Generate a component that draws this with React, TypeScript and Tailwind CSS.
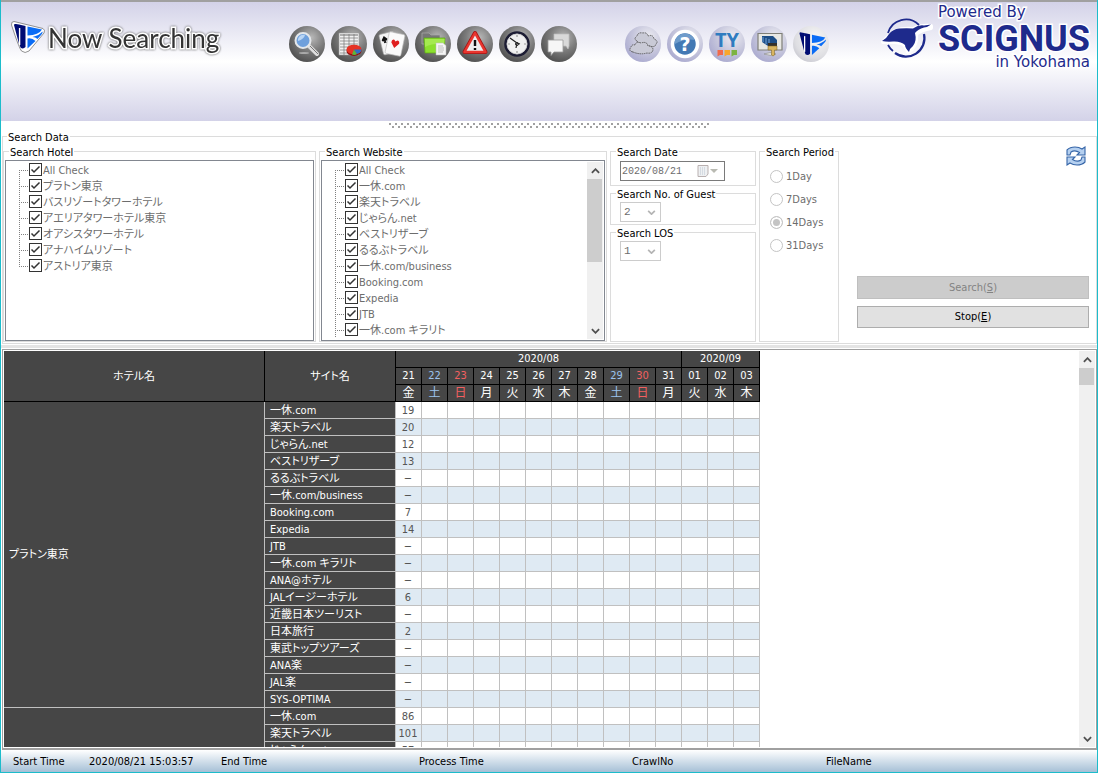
import React, { useState } from "react";

const hotels = [
  "All Check",
  "プラトン東京",
  "バスリゾートタワーホテル",
  "アエリアタワーホテル東京",
  "オアシスタワーホテル",
  "アナハイムリゾート",
  "アストリア東京",
];

const websites = [
  "All Check",
  "一休.com",
  "楽天トラベル",
  "じゃらん.net",
  "ベストリザーブ",
  "るるぶトラベル",
  "一休.com/business",
  "Booking.com",
  "Expedia",
  "JTB",
  "一休.com キラリト",
];

const sites = [
  ...websites.slice(1),
  "ANA@ホテル",
  "JALイージーホテル",
  "近畿日本ツーリスト",
  "日本旅行",
  "東武トップツアーズ",
  "ANA楽",
  "JAL楽",
  "SYS-OPTIMA",
];

// the second hotel is still being crawled, only its first sites are in
const results = [
  {
    id: 1,
    hotel: "プラトン東京",
    counts: ["19", "20", "12", "13", "−", "−", "7", "14", "−", "−", "−", "6", "−", "2", "−", "−", "−", "−"],
  },
  { id: 2, hotel: "", counts: ["86", "101", "57"] },
];

const days = [
  ["21", "金"],
  ["22", "土"],
  ["23", "日"],
  ["24", "月"],
  ["25", "火"],
  ["26", "水"],
  ["27", "木"],
  ["28", "金"],
  ["29", "土"],
  ["30", "日"],
  ["31", "月"],
  ["01", "火"],
  ["02", "水"],
  ["03", "木"],
];

const periods = ["1Day", "7Days", "14Days", "31Days"];

const dayColor = (weekday: string) => {
  if (weekday === "土") return "text-[#9cc3ee]";
  if (weekday === "日") return "text-[#f26060]";
  return "text-white";
};

const MarkShape = () => (
  <>
    <path d="M7 8 Q7 6.500 9 7 L12 7.600 V27 Z" fill="#000c73" />
    <path d="M12 7.600 L18.500 9 V30 Q16 32.500 13.500 30.500 L12 26Z" fill="#000c73" />
    <path d="M12.600 11 V28" stroke="#fff" strokeWidth="1.400" />
    <path d="M20.500 9.500 L35 12.500 Q32 18 20.500 18.500Z" fill="#0a6cf5" />
    <path d="M25.500 20 Q32 18.500 35.500 14.500 Q36 16 34.500 17.500 L30.500 22 Q28.500 20 25.500 20Z" fill="#0a6cf5" />
    <path d="M20.500 21.500 Q25 20.500 28.500 24 L20.500 31.500Z" fill="#0a6cf5" />
  </>
);

const BrandMark = () => (
  <svg viewBox="0 0 36 34" className="mt-[18px] h-[34px] w-9 shrink-0" aria-hidden="true">
    <path
      d="M4 1.500 L33 8.500 Q35.500 10 34 13 L19 31 Q15 34 11.500 31 Q9 28 1.500 5 Q1 1.500 4 1.500Z"
      fill="#fff"
      stroke="#777"
      strokeWidth="0.800"
    />
    <g transform="translate(-3 -3)">
      <MarkShape />
    </g>
  </svg>
);

const SearchIcon = () => (
  <>
    <ellipse cx="15" cy="27" rx="5" ry="1" fill="#aaa" />
    <path d="M20 20 L28 28" stroke="#ddd" strokeWidth="4" strokeLinecap="round" />
    <path d="M21 20 L29 28" stroke="#777" strokeWidth="1" />
    <circle cx="14" cy="14.500" r="7.500" fill="#6fa0dc" stroke="#e4e7ea" strokeWidth="2" />
    <path d="M9 13 Q11 8 16 9 Q15 13 9 15Z" fill="#b9d5f4" />
  </>
);

const ReportIcon = () => (
  <>
    <path d="M8 7 H28 V29 H8Z" fill="#f2f2f2" stroke="#999" strokeWidth="0.600" />
    <path d="M9 9 H27" stroke="#999" strokeWidth="1.500" />
    <path d="M9 12 H27 M9 15 H27 M9 18 H27 M9 21 H20 M9 24 H18 M9 27 H18 M13 8 V29 M18 8 V29 M23 8 V20" stroke="#777" strokeWidth="0.700" />
    <ellipse cx="23" cy="25" rx="7.500" ry="5" fill="#8e1212" />
    <ellipse cx="23" cy="23.500" rx="7.500" ry="4.800" fill="#e53325" />
    <path d="M23 23.500 L21 28.500 Q24 29.500 26 28Z" fill="#59b83c" />
    <path d="M23 23.500 L26 28 Q30 27 30.500 23.500Z" fill="#2d6fc7" />
  </>
);

const CardsIcon = () => (
  <>
    <g transform="rotate(-14 14 17)">
      <rect x="8" y="7" width="15" height="21" rx="1.500" fill="#f4f4f4" stroke="#aaa" strokeWidth="0.600" />
      <path d="M12.500 9.500 L15.500 13 Q15 15.500 12.500 14.300 Q10 15.500 9.500 13Z M12.500 13 L14 16.500 H11Z" fill="#111" />
    </g>
    <g transform="rotate(12 22 18)">
      <rect x="14" y="7" width="16" height="22" rx="1.500" fill="#fbfbfb" stroke="#bbb" strokeWidth="0.600" />
      <path d="M22 22 L18 17 Q18 13.500 20.500 14 L22 15.500 L23.500 14 Q26 13.500 26 17Z" fill="#e02020" />
    </g>
  </>
);

const FolderIcon = () => (
  <>
    <path d="M7 7 H14 L16 9 H25 V18 H7Z" fill="#777" stroke="#aaa" strokeWidth="0.700" />
    <path d="M9 12 H30 L29 27 H10Z" fill="#8ce02f" stroke="#5ba713" strokeWidth="0.700" />
    <path d="M10 13 H29.500 L29.200 18 Q18 17 10 21Z" fill="#a5ea50" />
    <path d="M21 17 H28 L31 19.500 V29 H21Z" fill="#f5f5f5" stroke="#bbb" strokeWidth="0.500" />
    <path d="M23 20 H28 M23 22 H29 M23 24 H29 M23 26 H28" stroke="#aaa" strokeWidth="0.700" />
  </>
);

const WarningIcon = () => (
  <>
    <path d="M18 7 L28.500 26 H7.500Z" fill="#eee" stroke="#a31515" strokeWidth="4" strokeLinejoin="round" />
    <path d="M18 7 L28.500 26 H7.500Z" fill="#eee" stroke="#e8352e" strokeWidth="2.500" strokeLinejoin="round" />
    <path d="M18 14 V20 M18 22 V24" stroke="#111" strokeWidth="2.400" />
  </>
);

const ClockIcon = () => (
  <>
    <circle cx="18" cy="18" r="11.500" fill="#f0f0f0" stroke="#1c1c33" strokeWidth="2.600" />
    <circle cx="18" cy="18" r="10" fill="none" stroke="#ccc" strokeWidth="0.800" />
    <path d="M18 9 V11 M18 25 V27 M9 18 H11 M25 18 H27" stroke="#999" strokeWidth="1.200" />
    <path d="M11 12 L18 17 L17 22 M18 17 L21 18" fill="none" stroke="#222" strokeWidth="1.200" />
    <circle cx="18" cy="18" r="1.500" fill="none" stroke="#222" />
  </>
);

const ChatIcon = () => (
  <>
    <path d="M13 8 H28 V20 L27 23 L25 20 H13Z" fill="#d9d9d9" stroke="#bbb" strokeWidth="0.700" />
    <path d="M7 14 H22 V26 H13 L10 29.500 V26 H7Z" fill="#f6f6f6" stroke="#999" strokeWidth="0.800" />
  </>
);

const CloudIcon = () => (
  <g fill="#c9cad6" stroke="#555" strokeWidth="0.900" strokeDasharray="1.500 0.700">
    <path d="M12 15 Q8 13 12 10 Q13 6 18 7 Q22 6 23 10 Q28 8 29 13 Q34 15 31 18 Q30 22 25 20 Q17 21 12 15Z" />
    <path d="M8 26 Q3 25 6 21 Q7 18 10 19 Q11 15 16 17 Q22 15 23 20 Q28 20 28 24 Q27 28 22 27 Q15 29 8 26Z" />
  </g>
);

const HelpIcon = () => (
  <>
    <circle cx="18" cy="18" r="12.500" fill="#4379b4" stroke="#fff" strokeWidth="3.500" />
    <path d="M8 14 Q12 7 18 7.500 Q25 8 28 14 Q18 12 8 18Z" fill="#6f9ccb" />
    <text x="18" y="25" textAnchor="middle" fill="#fff" fontSize="19" fontWeight="700" fontFamily="DejaVu Sans">?</text>
  </>
);

const TyIcon = () => (
  <>
    <text x="18" y="21" textAnchor="middle" fill="#2f7cc0" fontSize="20" fontWeight="700" fontFamily="Open Sans">TY</text>
    <path d="M8.500 24 H14 V29 H11 L8.500 30.500Z" fill="#f26a4b" />
    <path d="M15.500 24 H21 V29 H18 L15.500 30.500Z" fill="#f9a72b" />
    <path d="M22.500 24 H28 V29 H25 L22.500 30.500Z" fill="#7cb342" />
  </>
);

const DesktopIcon = () => (
  <>
    <path d="M7 7.500 H31 V24 H7Z" fill="#e8e8e4" stroke="#7f7f78" strokeWidth="1.200" />
    <path d="M11 10 H22 L26 14 V20 H17 L11 16Z" fill="#1d4d86" />
    <path d="M12 11 V16 M15 12 V18 M18 13 V20" stroke="#78a8d8" strokeWidth="1" />
    <path d="M13 28 Q19 25 25 28 Q20 31 13 28Z" fill="#ddd" stroke="#888" strokeWidth="0.600" />
    <path d="M17 17 H26 V23 H17Z" fill="#33302b" />
    <path d="M17 20 H26 V24 H23.500 V29 Q22 31 20.500 29 V24 H17Z" fill="#d8b45f" stroke="#7d6223" strokeWidth="0.500" />
  </>
);

const tools = [
  { label: "Search", icon: <SearchIcon /> },
  { label: "Report", icon: <ReportIcon /> },
  { label: "Cards", icon: <CardsIcon /> },
  { label: "Folder", icon: <FolderIcon /> },
  { label: "Alert", icon: <WarningIcon /> },
  { label: "Schedule", icon: <ClockIcon /> },
  { label: "Messages", icon: <ChatIcon /> },
];

const links = [
  { label: "Weather", icon: <CloudIcon /> },
  { label: "Help", icon: <HelpIcon /> },
  { label: "TY", icon: <TyIcon /> },
  { label: "Desktop", icon: <DesktopIcon /> },
];

const ToolSvg = ({ children }: { children: React.ReactNode }) => (
  <svg viewBox="0 0 36 36" className="size-9" aria-hidden="true">
    {children}
  </svg>
);

const SwanLogo = () => (
  <svg viewBox="0 0 54 46" className="mt-[12px] h-[46px] w-[54px]" aria-hidden="true">
    <g fill="#fff" stroke="#fff" strokeWidth="4" strokeLinejoin="round">
      <path d="M2 28 Q8 21 14 17 Q22 14 32 15 Q40 11 50 12 L50 14 Q40 16 35 20 Q36 29 31 35 L27 38 Q25 31 20 29 Q10 27 2 28Z" />
    </g>
    <path d="M7 19 A18.500 18.500 0 0 1 38 11" fill="none" stroke="#1e2a8c" strokeWidth="1.800" />
    <path d="M43 20 A18.500 18.500 0 0 1 14 39" fill="none" stroke="#1e2a8c" strokeWidth="2.200" />
    <path d="M12 37 A18.500 18.500 0 0 1 7 31" fill="none" stroke="#1e2a8c" strokeWidth="1.800" />
    <path
      d="M1 27 Q6 24 8 20 Q12 15 18 14.500 Q26 14 32 14.500 Q38 10.500 43 11.500 L50 10.500 Q47 13 43 13.500 Q37 15 34 19 Q36 27 32 32 Q29 34 28 38 Q24 34 24 31 Q20 27 12 27.500 Q6 28 1 27Z"
      fill="#1e2a8c"
    />
  </svg>
);

const Chevron = ({ up, className }: { up?: boolean; className: string }) => (
  <svg viewBox="0 0 10 6" className={className} aria-hidden="true">
    <path d={up ? "M1 5 L5 1 L9 5" : "M1 1 L5 5 L9 1"} fill="none" stroke="currentColor" strokeWidth="2" />
  </svg>
);

const ScrollBar = ({ thumb }: { thumb: string }) => (
  <div className="flex w-4 shrink-0 flex-col bg-[#f0f0f0] text-[#505050]">
    <button aria-label="Scroll up" className="flex h-[17px] items-center justify-center">
      <Chevron up className="h-[6px] w-[9px]" />
    </button>
    <div className="flex-1">
      <div className={`mr-px bg-[#cdcdcd] ${thumb}`} />
    </div>
    <button aria-label="Scroll down" className="flex h-[17px] items-center justify-center">
      <Chevron className="h-[6px] w-[9px]" />
    </button>
  </div>
);

const Group = ({ title, className, children }: { title: string; className?: string; children: React.ReactNode }) => (
  <fieldset className={`min-w-0 border border-[#dcdcdc] ${className ?? ""}`}>
    <legend className="ml-[5px] px-px pt-[2px] leading-[13px] text-black">{title}</legend>
    {children}
  </fieldset>
);

const CheckTree = ({ name, items, open }: { name: string; items: string[]; open?: boolean }) => {
  const [checked, setChecked] = useState<boolean[]>(items.map(() => true));

  const toggle = (index: number) => {
    setChecked((prev) => prev.map((value, i) => (i === index ? !value : value)));
  };

  return (
    <ul className="min-w-0 flex-1 overflow-hidden pl-[13px] text-[#6d6d6d]">
      {items.map((item, index) => {
        const top = index === 0 ? 8 : 0;
        const bottom = index === items.length - 1 && !open ? 9 : 16;
        return (
          <li key={item} className="flex h-4 items-start">
            <svg viewBox="0 0 10 16" className="h-4 w-[10px] shrink-0" shapeRendering="crispEdges" aria-hidden="true">
              <path d={`M0.500 ${top} V${bottom} M2 8.500 H10`} stroke="#808080" strokeDasharray="1 1" />
            </svg>
            <span className="relative mt-px size-[13px] shrink-0">
              <input
                id={`${name}-${index}`}
                type="checkbox"
                checked={checked[index]}
                onChange={() => toggle(index)}
                className="block size-[13px] appearance-none border border-[#333] bg-white"
              />
              {checked[index] && (
                <svg viewBox="0 0 13 13" className="pointer-events-none absolute inset-0" aria-hidden="true">
                  <path d="M2.500 6.500 L5 9 L10.500 3.500" fill="none" stroke="#333" strokeWidth="1.500" />
                </svg>
              )}
            </span>
            <label htmlFor={`${name}-${index}`} className="pl-px leading-[18px] whitespace-nowrap">
              {item}
            </label>
          </li>
        );
      })}
    </ul>
  );
};

const NumberSelect = ({ label, value }: { label: string; value: string }) => (
  <div className="relative mt-px ml-[9px] w-[41px]">
    <select
      aria-label={label}
      defaultValue={value}
      disabled
      className="block h-5 w-full appearance-none border border-[#ccc] bg-white pl-[3px] font-['Liberation_Mono',monospace] text-[11px] text-[#6d6d6d] opacity-100"
    >
      <option>1</option>
      <option>2</option>
    </select>
    <Chevron className="pointer-events-none absolute top-[8px] right-[5px] h-[5px] w-[9px] text-[#b4b4b4]" />
  </div>
);

const Header = () => (
  <header className="flex h-[121px] shrink-0 items-start border-t-2 border-[#a0a0a0] bg-linear-to-b from-[#d3d2e8] via-white to-[#d3d2e8] pr-[7px] pl-[9px]">
    <BrandMark />
    <h1 className="mt-[18px] ml-[2px] w-[241px] shrink-0 font-['Lato',sans-serif] text-[26px] leading-9 whitespace-nowrap text-[#333] drop-shadow-[0_0_1px_#555] [-webkit-text-stroke:3px_#fff] [paint-order:stroke_fill]">
      Now Searching
    </h1>
    <nav className="mt-6 flex gap-[6px]" aria-label="Tools">
      {tools.map((tool) => (
        <button
          key={tool.label}
          aria-label={tool.label}
          className="size-9 rounded-full bg-[radial-gradient(circle_at_62%_32%,#b8b8b8_0%,#7c7c7c_40%,#3c3c3c_95%)]"
        >
          <ToolSvg>{tool.icon}</ToolSvg>
        </button>
      ))}
    </nav>
    <nav className="mt-6 ml-12 flex gap-[6px]" aria-label="Links">
      {links.map((link) => (
        <button
          key={link.label}
          aria-label={link.label}
          className="size-9 rounded-full bg-[radial-gradient(circle_at_65%_30%,#ececf2_0%,#c6c6dc_45%,#9a9ac8_100%)]"
        >
          <ToolSvg>{link.icon}</ToolSvg>
        </button>
      ))}
      <button
        aria-label="Home"
        className="size-9 rounded-full bg-[radial-gradient(circle_at_60%_35%,#f8f8f8_0%,#dedee2_60%,#b4b4c0_100%)]"
      >
        <svg viewBox="0 0 39 39" className="size-9" aria-hidden="true">
          <MarkShape />
        </svg>
      </button>
    </nav>
    <div className="ml-auto flex">
      <SwanLogo />
      <div className="flex flex-col whitespace-nowrap text-[#1e2a8c] [-webkit-text-stroke:3px_#fff] [paint-order:stroke_fill]">
        <span className="mt-px pl-[3px] font-['DejaVu_Sans',sans-serif] text-[15px] leading-[18px]">Powered By</span>
        <span className="pl-[3px] font-['Roboto',sans-serif] text-[36px] leading-[36px] font-bold">SCIGNUS</span>
        <span className="self-end font-['DejaVu_Sans',sans-serif] text-[15px] leading-[10px]">in Yokohama</span>
      </div>
    </div>
  </header>
);

const Splitter = () => (
  <svg className="mx-auto block h-[8px] w-[320px] shrink-0" shapeRendering="crispEdges" aria-hidden="true">
    <defs>
      <pattern id="grip" width="6" height="8" patternUnits="userSpaceOnUse">
        <path d="M0 2 H2 V4 H0Z M3 5 H5 V7 H3Z" fill="#a0a0a0" />
      </pattern>
    </defs>
    <rect width="320" height="8" fill="url(#grip)" />
  </svg>
);

const SearchPanel = () => {
  const [period, setPeriod] = useState("14Days");

  return (
    <fieldset className="ml-px min-w-0 shrink-0 border border-[#dcdcdc] pb-px">
      <legend className="ml-1 px-px pt-[2px] leading-[13px] text-black">Search Data</legend>
      <div className="flex gap-[3px]">
        <Group title="Search Hotel" className="w-[313px] shrink-0">
          <div className="mx-px mt-px flex h-[181px] border border-[#828790] pt-px">
            <CheckTree name="hotel" items={hotels} />
          </div>
        </Group>
        <Group title="Search Website" className="w-[288px] shrink-0">
          <div className="mx-px mt-px flex h-[181px] border border-[#828790] p-px pl-0">
            <CheckTree name="site" items={websites} open />
            <ScrollBar thumb="h-[83px]" />
          </div>
        </Group>
        <div className="flex w-[146px] shrink-0 flex-col">
          <Group title="Search Date" className="h-[42px]">
            <div className="mt-[2px] ml-[9px] flex h-5 w-[105px] items-center border border-[#7a7a7a] pr-[6px]">
              <input
                aria-label="Search Date"
                defaultValue="2020/08/21"
                disabled
                className="h-full min-w-0 flex-1 pl-px font-['Liberation_Mono',monospace] text-[10px] text-[#6d6d6d]"
              />
              <svg viewBox="0 0 21 12" className="h-3 w-[21px]" aria-hidden="true">
                <path d="M1 0.500 H11 V9 L9 11.500 H1Z" fill="#eef0f2" stroke="#b9b0b0" />
                <path d="M3 3 H9 M3 5 H9 M3 7 H9 M3 9 H8" stroke="#bcc6d2" strokeDasharray="1 1" />
                <path d="M13 4 H21 L17 8Z" fill="#b9bab2" />
              </svg>
            </div>
          </Group>
          <Group title="Search No. of Guest" className="h-[39px]">
            <NumberSelect label="Search No. of Guest" value="2" />
          </Group>
          <Group title="Search LOS" className="flex-1">
            <NumberSelect label="Search LOS" value="1" />
          </Group>
        </div>
        <Group title="Search Period" className="w-20 shrink-0">
          <div className="pt-[6px] pl-[10px]">
            {periods.map((item) => (
              <label key={item} className="flex h-[23px] items-center gap-[3px] text-[#6d6d6d]">
                <input
                  type="radio"
                  name="period"
                  checked={period === item}
                  onChange={() => setPeriod(item)}
                  className="size-[13px] appearance-none rounded-full border border-[#c4c4c4] bg-white checked:bg-[#c4c4c4] checked:shadow-[inset_0_0_0_2px_#fff]"
                />
                <span className="pt-[2px]">{item}</span>
              </label>
            ))}
          </div>
        </Group>
        <div className="flex min-w-0 flex-1 flex-col justify-between pr-[7px] pb-[14px] pl-[15px]">
          <button aria-label="Refresh" className="mt-[2px] mr-[3px] self-end">
            <svg viewBox="0 0 20 20" className="size-5" aria-hidden="true">
              <path
                d="M1 9 V4 Q4 1 9 1 Q13 1 16 3 L19 1 V9 H11 L13.500 6.500 Q9 3.500 5 6 L4 9Z"
                fill="#b5d0f0"
                stroke="#3565a8"
                strokeWidth="1.100"
              />
              <path
                d="M19 11 V16 Q16 19 11 19 Q7 19 4 17 L1 19 V11 H9 L6.500 13.500 Q11 16.500 15 14 L16 11Z"
                fill="#b5d0f0"
                stroke="#3565a8"
                strokeWidth="1.100"
              />
            </svg>
          </button>
          <div className="flex flex-col gap-[7px]">
            <button disabled className="h-[23px] border border-[#bfbfbf] bg-[#ccc] pt-[2px] text-[#838383]">
              Search(<u>S</u>)
            </button>
            <button className="h-[22px] border border-[#adadad] bg-[#e1e1e1] pt-px text-black">
              Stop(<u>E</u>)
            </button>
          </div>
        </div>
      </div>
    </fieldset>
  );
};

const ResultTable = () => (
  <table className="w-[756px] table-fixed border-separate border-spacing-0 bg-[#464646] text-white">
    <colgroup>
      <col className="w-[261px]" />
      <col className="w-[131px]" />
      {days.map(([day]) => (
        <col key={day} className="w-[26px]" />
      ))}
    </colgroup>
    <thead>
      <tr>
        <th rowSpan={3} className="border-r border-b border-black p-0 pt-[2px] font-normal">ホテル名</th>
        <th rowSpan={3} className="border-r border-b border-black p-0 pt-[2px] font-normal">サイト名</th>
        <th colSpan={11} className="h-[17px] border-r border-b border-black p-0 leading-4 font-normal">2020/08</th>
        <th colSpan={3} className="h-[17px] border-r border-b border-black p-0 leading-4 font-normal">2020/09</th>
      </tr>
      <tr>
        {days.map(([day, weekday]) => (
          <th key={day} className={`h-[17px] border-r border-b border-black p-0 leading-4 font-normal ${dayColor(weekday)}`}>
            {day}
          </th>
        ))}
      </tr>
      <tr>
        {days.map(([day, weekday]) => (
          <th key={day} className={`h-[17px] border-r border-b border-black p-0 text-[12px] leading-4 font-normal ${dayColor(weekday)}`}>
            {weekday}
          </th>
        ))}
      </tr>
    </thead>
    <tbody>
      {results.map((result) =>
        result.counts.map((count, index) => (
          <tr key={`${result.id}-${index}`}>
            {index === 0 && (
              <td rowSpan={result.counts.length} className="border-r border-b border-[#c0c0c0] p-0 pt-[2px] pl-[5px]">
                {result.hotel}
              </td>
            )}
            <td className="h-[17px] border-r border-b border-[#c0c0c0] p-0 pt-[2px] pl-[5px] leading-[14px] whitespace-nowrap">
              {sites[index]}
            </td>
            {days.map(([day], column) => (
              <td
                key={day}
                className={`h-[17px] border-r border-b border-[#c0c0c0] p-0 pt-[2px] pr-px text-center leading-[14px] text-[#555] ${
                  index % 2 ? "bg-[#dfeaf3]" : "bg-white"
                }`}
              >
                {column === 0 ? count : ""}
              </td>
            ))}
          </tr>
        )),
      )}
    </tbody>
  </table>
);

const StatusBar = () => (
  <footer className="grid h-[22px] shrink-0 grid-cols-[76fr_132fr_198fr_213fr_194fr_271fr] items-center bg-linear-to-b from-white to-[#a6c0d6] pt-[2px] pl-3 whitespace-nowrap text-black">
    <span>Start Time</span>
    <span>2020/08/21 15:03:57</span>
    <span>End Time</span>
    <span>Process Time</span>
    <span>CrawlNo</span>
    <span>FileName</span>
  </footer>
);

const App = () => {
  return (
    <div className="flex h-screen flex-col overflow-hidden border-x border-b border-[#1cbccb] bg-white font-['DejaVu_Sans_Condensed','Noto_Sans','Noto_Sans_CJK_JP',sans-serif] text-[11px] [font-feature-settings:'palt']">
      <Header />
      <Splitter />
      <SearchPanel />
      <div className="my-px h-[3px] shrink-0 bg-[#e4e4e4]" />
      <main className="ml-px flex min-h-0 flex-1 border border-b-2 border-[#a0a0a0] p-px">
        <div className="min-w-0 flex-1 overflow-hidden">
          <ResultTable />
        </div>
        <ScrollBar thumb="h-[17px]" />
      </main>
      <StatusBar />
    </div>
  );
};

export default App;
